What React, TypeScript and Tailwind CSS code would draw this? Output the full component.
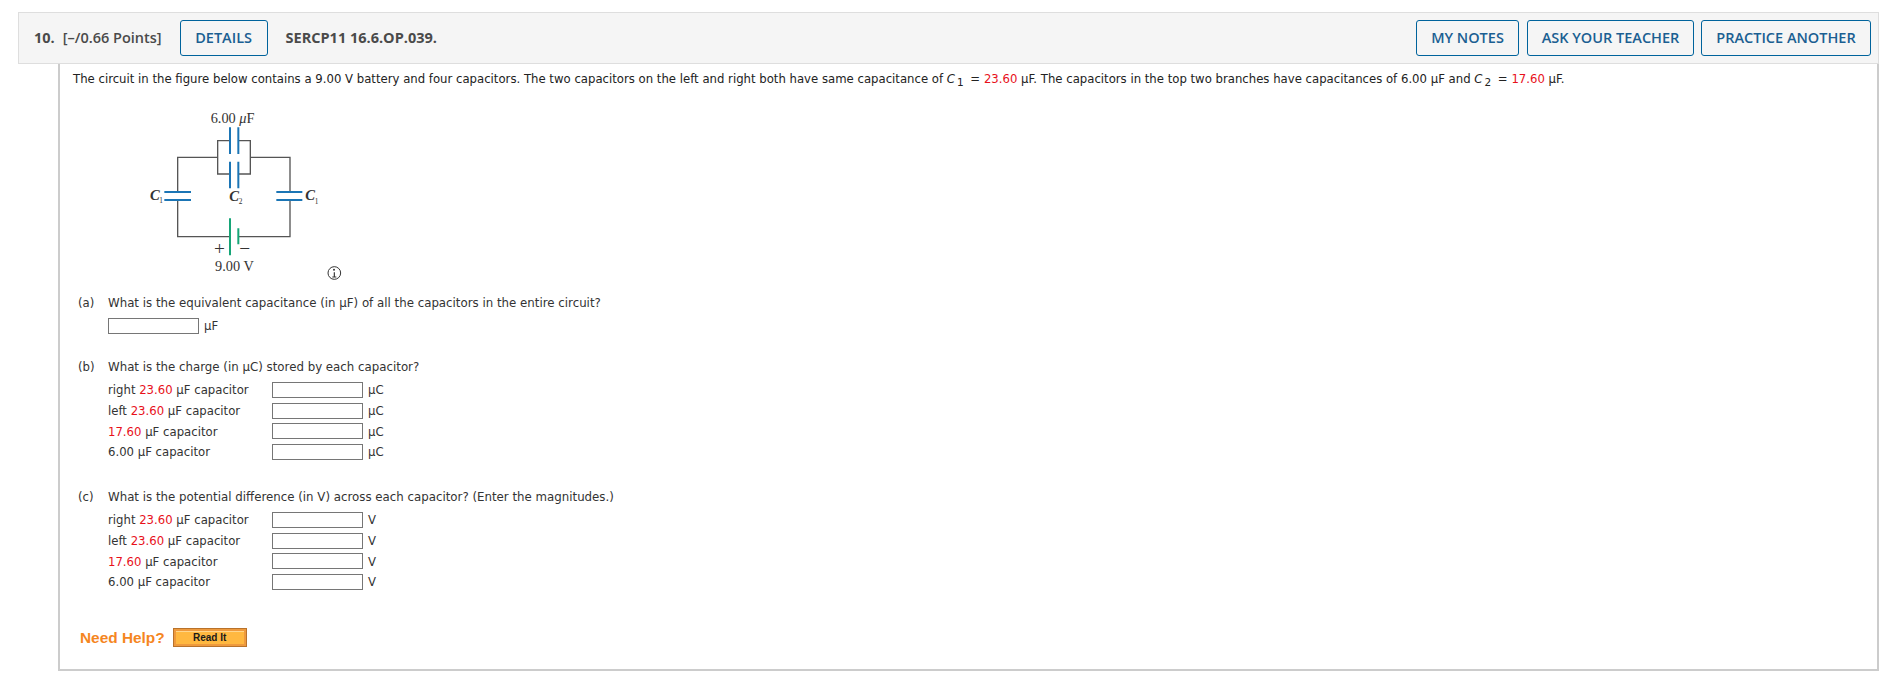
import React from "react";

const Red = ({ children }: { children: React.ReactNode }) => (
  <span className="text-[#e8111b]">{children}</span>
);

const HeaderButton = ({ label, className }: { label: string; className: string }) => (
  <button className={`h-[36px] rounded-[3px] border border-[#00639c] text-[#1b5f92] font-semibold ${className}`}>
    {label}
  </button>
);

const Figure = () => (
  <svg viewBox="0 0 660 555" className="w-[220px] h-[185px] ml-[71px] mt-[13px] block">
    <g stroke="#555555" strokeWidth="4" fill="none">
      <path d="M297 122H260V222H297M322 122H358V222H322" />
      <path d="M260 172H140V276M140 300V410H297M322 410H477V300M477 276V172H358" />
    </g>
    <g stroke="#1b75b5" strokeWidth="6" fill="none">
      <path d="M297 82V162M322 82V162M297 185V265M322 185V265" />
      <path d="M100 276H180M100 300H180M436 276H514M436 300H514" />
    </g>
    <path d="M297 355V466M322 385V433" stroke="#16a577" strokeWidth="6" fill="none" />
    <g fontFamily="'Liberation Serif', serif" fill="#333333">
      <text x="239" y="70" fontSize="43">6.00 <tspan fontStyle="italic">μ</tspan>F</text>
      <text x="57" y="299" fontSize="44" fontStyle="italic" fontWeight="bold">C</text>
      <text x="85" y="309" fontSize="22">1</text>
      <text x="295" y="303" fontSize="44" fontStyle="italic" fontWeight="bold">C</text>
      <text x="323" y="313" fontSize="22">2</text>
      <text x="523" y="301" fontSize="44" fontStyle="italic" fontWeight="bold">C</text>
      <text x="551" y="311" fontSize="22">1</text>
      <text x="249" y="464" fontSize="58">+</text>
      <text x="325" y="464" fontSize="58">−</text>
      <text x="252" y="514" fontSize="43">9.00 V</text>
    </g>
    <circle cx="610" cy="519" r="19" fill="none" stroke="#333333" strokeWidth="3" />
    <path d="M610 517V531M604 531H616" stroke="#333333" strokeWidth="3.5" fill="none" />
    <circle cx="609" cy="509" r="3" fill="#333333" />
  </svg>
);

const Field = ({ unit }: { unit: string }) => (
  <div className="flex items-center h-[16px]">
    <input className="w-[91px] h-[16px] border border-[#767676] bg-white" />
    <span className="ml-[5px] pt-[2px]">{unit}</span>
  </div>
);

const capacitors: React.ReactNode[] = [
  <>right <Red>23.60</Red> μF capacitor</>,
  <>left <Red>23.60</Red> μF capacitor</>,
  <><Red>17.60</Red> μF capacitor</>,
  <>6.00 μF capacitor</>,
];

const Rows = ({ unit }: { unit: string }) => (
  <div className="ml-[30px] mt-[6px] flex flex-col gap-[4.67px]">
    {capacitors.map((c, index) => (
      <div key={index} className="flex items-center h-[16px]">
        <div className="w-[164px] pt-[2px] whitespace-nowrap">{c}</div>
        <Field unit={unit} />
      </div>
    ))}
  </div>
);

const Question = ({ part, children }: { part: string; children: React.ReactNode }) => (
  <div className="flex h-[18px] items-center pt-[2px]">
    <div className="w-[30px]">({part})</div>
    <div className="whitespace-nowrap text-[11.8px]">{children}</div>
  </div>
);

const Sub = ({ children }: { children: React.ReactNode }) => (
  <sub className="text-[10.5px] ml-[2px] mr-[3px] bottom-[-3px]">{children}</sub>
);

export default function App() {
  return (
    <div className="bg-white h-[688px] pt-[12px] pl-[18px] pr-[12px] text-[#333333] overflow-hidden font-['DejaVu_Sans',sans-serif] text-[11.7px]">
      <div className="h-[52px] flex items-center justify-between pl-[15px] pr-[7px] bg-[#f5f5f5] border border-[#dedede] font-['Open_Sans',sans-serif] text-[#4a4a4a] text-[14.5px] font-semibold">
        <div className="flex items-center">
          <span className="font-bold">10.</span>
          <span className="ml-[8px]">[–/0.66 Points]</span>
          <HeaderButton label="DETAILS" className="ml-[18px] w-[88px]" />
          <span className="ml-[18px] font-bold">SERCP11 16.6.OP.039.</span>
        </div>
        <div className="flex items-center">
          <HeaderButton label="MY NOTES" className="w-[103px]" />
          <HeaderButton label="ASK YOUR TEACHER" className="ml-[8px] w-[167px]" />
          <HeaderButton label="PRACTICE ANOTHER" className="ml-[7px] w-[170px]" />
        </div>
      </div>
      <div className="ml-[40px] h-[607px] border-l-2 border-r-2 border-b-2 border-[#cccccc]">
        <p className="pl-[13px] pt-[6px] h-[23px] leading-[18px] text-[#222222] whitespace-nowrap">
          The circuit in the figure below contains a 9.00 V battery and four capacitors. The two capacitors on the left and right both have same capacitance of{" "}
          <i>C</i><Sub>1</Sub> = <Red>23.60</Red> μF. The capacitors in the top two branches have capacitances of 6.00 μF and{" "}
          <i>C</i><Sub>2</Sub> = <Red>17.60</Red> μF.
        </p>
        <Figure />
        <div className="pl-[18px] mt-[9px]">
          <Question part="a">What is the equivalent capacitance (in μF) of all the capacitors in the entire circuit?</Question>
          <div className="ml-[30px] mt-[6px]">
            <Field unit="μF" />
          </div>
          <div className="mt-[24px]">
            <Question part="b">What is the charge (in μC) stored by each capacitor?</Question>
            <Rows unit="μC" />
          </div>
          <div className="mt-[28px]">
            <Question part="c">What is the potential difference (in V) across each capacitor? (Enter the magnitudes.)</Question>
            <Rows unit="V" />
          </div>
          <div className="mt-[36px] ml-[2px] flex items-center">
            <span className="font-['Liberation_Sans',sans-serif] font-bold text-[15.4px] text-[#f5861f]">Need Help?</span>
            <span className="ml-[8px] w-[74px] h-[19px] p-[2px] border border-[#b9722a] bg-[#ee9a3e] block">
              <span className="h-full flex items-center justify-center border-t border-[#ffd68c] bg-[#ffb840] font-['Liberation_Sans',sans-serif] font-bold text-[10px] text-[#1a1a1a]">
                Read It
              </span>
            </span>
          </div>
        </div>
      </div>
    </div>
  );
}
